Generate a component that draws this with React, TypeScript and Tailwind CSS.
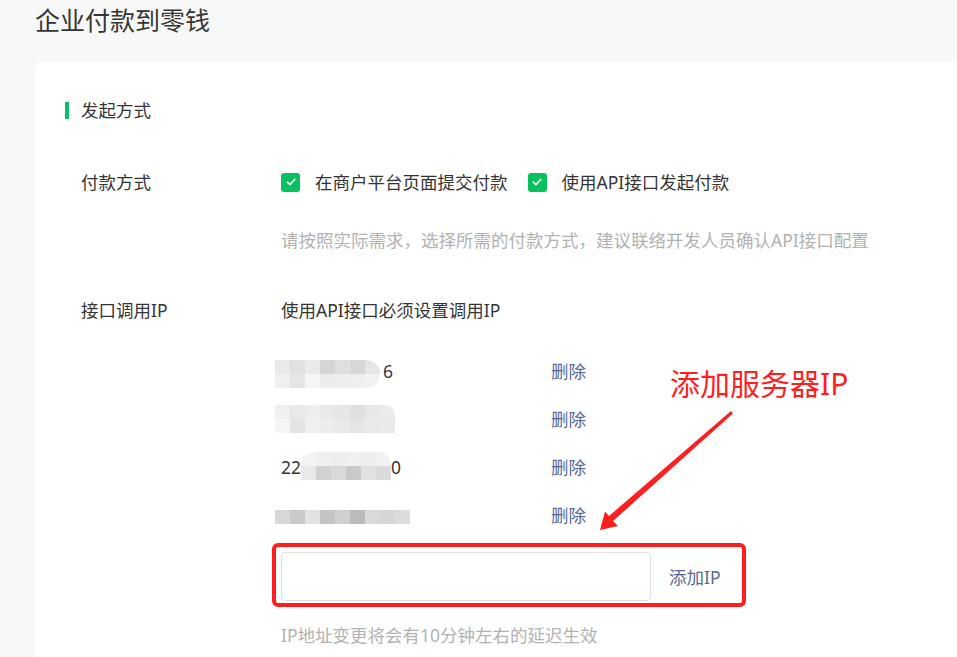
import React from "react";

const FONT = { fontFamily: '"Noto Sans", "Noto Sans CJK SC", sans-serif' };

function Blur({ rows, className = "" }: { rows: string[][]; className?: string }) {
  return (
    <div className={"flex flex-col overflow-hidden " + className}>
      {rows.map((r, i) => (
        <div key={i} className="flex">
          {r.map((c, j) => (
            <div key={j} className="w-[15px] h-[14px]" style={{ background: c }} />
          ))}
        </div>
      ))}
    </div>
  );
}

function Check() {
  return (
    <span className="w-[19px] h-[19px] rounded-[3px] bg-[#07c160] flex items-center justify-center shrink-0">
      <svg width="12" height="12" viewBox="0 0 12 12" fill="none">
        <path d="M2.3 6.2 L4.9 8.6 L9.8 3.4" stroke="white" strokeWidth="1.6" strokeLinecap="round" strokeLinejoin="round" />
      </svg>
    </span>
  );
}

function IpRow({ children }: { children: React.ReactNode }) {
  return (
    <div className="flex items-center h-[48px]">
      <div className="w-[270px] flex items-center text-[#353535]">{children}</div>
      <span className="text-[#576b95] cursor-pointer">删除</span>
    </div>
  );
}

export default function App() {
  return (
    <div className="relative min-h-screen w-full overflow-hidden bg-[#f8f8f8] text-[17.5px] leading-[24px]" style={FONT}>
      <div className="pl-[35px]">
        <h1 className="pt-[2px] h-[38px] text-[25px] leading-[36px] text-[#353535] font-normal">企业付款到零钱</h1>
        <div className="mt-[24px] bg-white rounded-l-[6px] pt-[36px] pb-[40px] pl-[30px]">
          <div className="flex items-center h-[24px]">
            <span className="w-[4px] h-[17px] bg-[#07c160]" />
            <span className="ml-[12px] text-[#353535]">发起方式</span>
          </div>

          <div className="pl-[16px]">
            <div className="flex mt-[48px]">
              <div className="w-[200px] text-[#353535] h-[24px]">付款方式</div>
              <div className="flex flex-col">
                <div className="flex items-center h-[24px] text-[#353535]">
                  <Check />
                  <span className="ml-[15px]">在商户平台页面提交付款</span>
                  <span className="ml-[20px]"><Check /></span>
                  <span className="ml-[15px]">使用API接口发起付款</span>
                </div>
                <div className="mt-[34px] text-[#b2b2b2] h-[24px]">请按照实际需求，选择所需的付款方式，建议联络开发人员确认API接口配置</div>
              </div>
            </div>

            <div className="flex mt-[46px]">
              <div className="w-[200px] text-[#353535] h-[24px]">接口调用IP</div>
              <div className="flex flex-col">
                <div className="h-[24px] text-[#353535]">使用API接口必须设置调用IP</div>
                <div className="mt-[25px] flex flex-col">
                  <IpRow>
                    <Blur
                      className="-ml-[6px] mt-[6px] rounded-r-[14px]"
                      rows={[
                        ["#e9e9e9", "#e1e1e1", "#eaeaea", "#d5d5d5", "#dfdfdf", "#d7d7d7", "#e6e6e6"],
                        ["#efefef", "#e5e5e5", "#f5f5f5", "#ececec", "#eeeeee", "#efefef", "#f2f2f2"],
                      ]}
                    />
                    <span className="ml-[3px]">6</span>
                  </IpRow>
                  <IpRow>
                    <Blur
                      className="-ml-[6px] mt-[-1px] rounded-tr-[10px]"
                      rows={[
                        ["#f0f0f0", "#e9e9e9", "#eeeeee", "#e9e9e9", "#e6e6e6", "#e0e0e0", "#e8e8e8", "#ebebeb"],
                        ["#f5f5f5", "#e4e4e4", "#efefef", "#ececec", "#e9e9e9", "#e5e5e5", "#e9e9e9", "#eaeaea"],
                      ]}
                    />
                  </IpRow>
                  <IpRow>
                    <span>22</span>
                    <Blur
                      className="mt-[-2px] rounded-tl-[12px] rounded-tr-[12px]"
                      rows={[
                        ["#f3f3f3", "#efefef", "#eeeeee", "#f0f0f0", "#eeeeee", "#f2f2f2"],
                        ["#e9e9e9", "#d1d1d1", "#d9d9d9", "#c9c9c9", "#e1e1e1", "#dadada"],
                      ]}
                    />
                    <span>0</span>
                  </IpRow>
                  <IpRow>
                    <Blur
                      className="-ml-[6px] mt-[3px]"
                      rows={[["#d7d7d7", "#c9c9c9", "#e2e2e2", "#c4c4c4", "#d0d0d0", "#bbbbbb", "#d9d9d9", "#d6d6d6", "#dcdcdc"]]}
                    />
                  </IpRow>
                </div>

                <div className="relative mt-[13px] flex items-center">
                  <div className="absolute left-[-9px] top-[-9px] w-[474px] h-[64px] border-[4px] border-[#ff1e1e] rounded-[6px] pointer-events-none" />
                  <input className="w-[370px] h-[49px] border border-[#e0e0e0] rounded-[4px] outline-none px-3" />
                  <span className="ml-[18px] text-[#576b95]">添加IP</span>
                </div>

                <div className="mt-[22px] h-[24px] text-[#b2b2b2]">IP地址变更将会有10分钟左右的延迟生效</div>
              </div>
            </div>
          </div>
        </div>
      </div>

      <div className="absolute left-[670px] top-[364px] text-[30px] leading-[40px] text-[#ff1f1f]">添加服务器IP</div>
      <svg className="absolute left-0 top-0 pointer-events-none" width="957" height="657" viewBox="0 0 957 657">
        <polygon
          points="731,411 733,413.5 613,521 618,526 600,530 605,511.5 609,516"
          fill="#ff1f1f"
        />
      </svg>
    </div>
  );
}
